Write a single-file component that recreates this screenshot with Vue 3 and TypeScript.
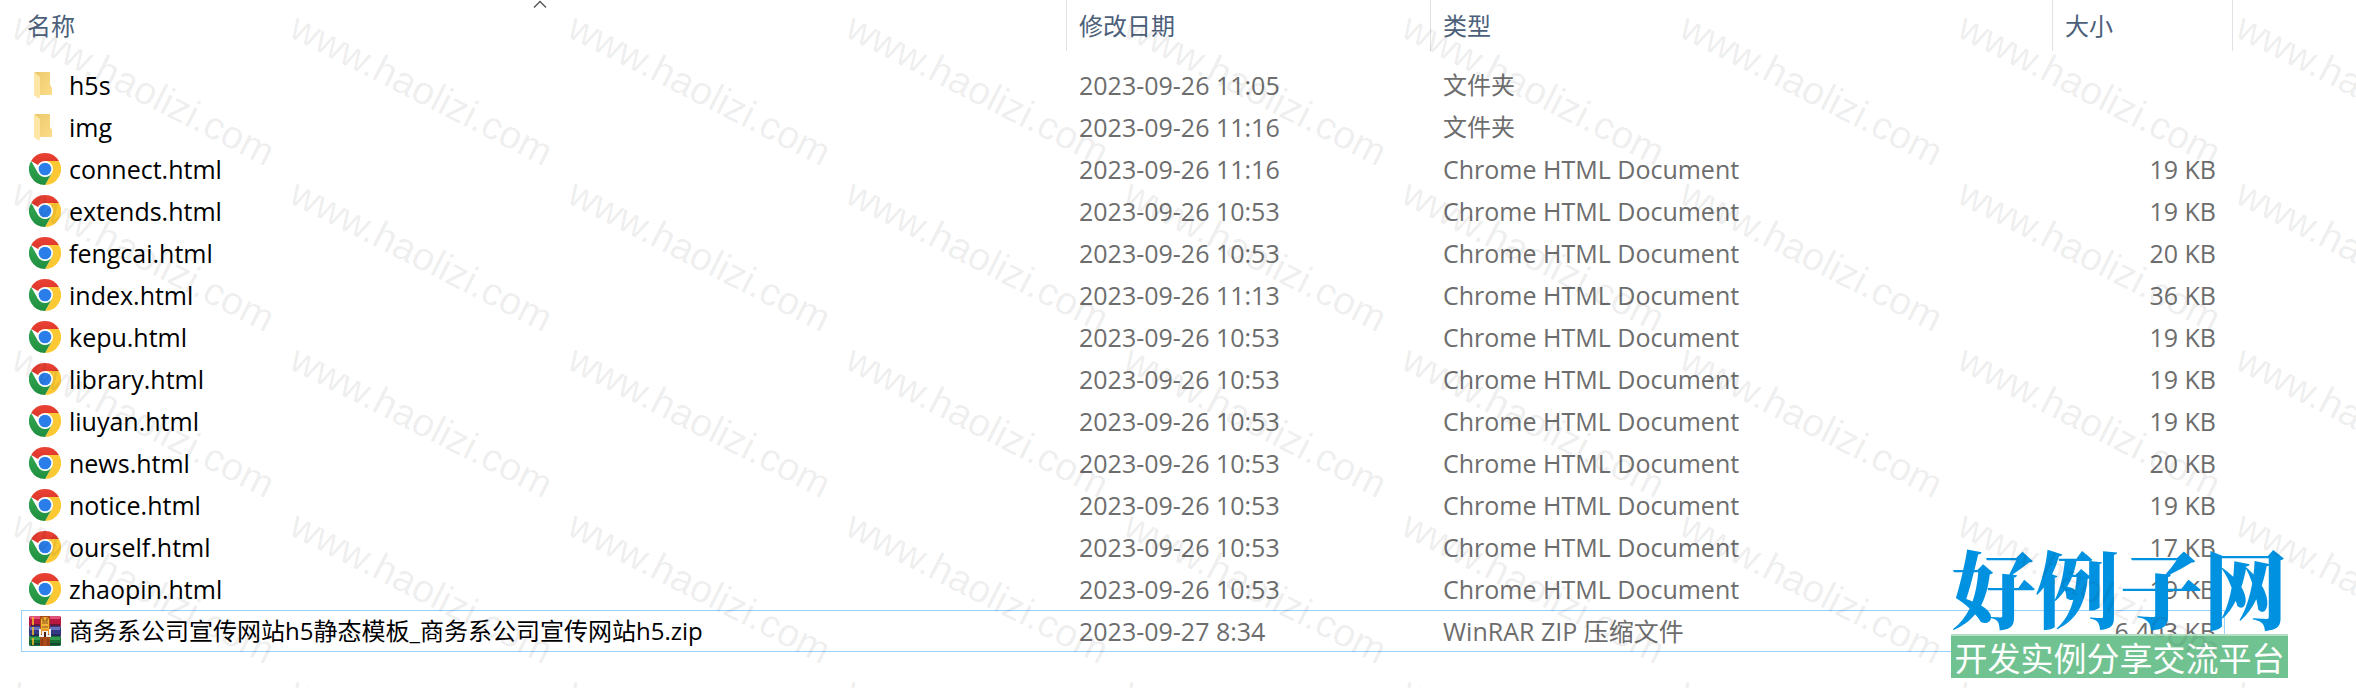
<script setup lang="ts">
type Kind = 'folder' | 'chrome' | 'archive'

interface FileRow {
  name: string
  date: string
  type: string
  size: string
  kind: Kind
}

const page = (name: string, time: string, size: number): FileRow => ({
  name,
  date: `2023-09-26 ${time}`,
  type: 'Chrome HTML Document',
  size: `${size} KB`,
  kind: 'chrome',
})

const folder = (name: string, time: string): FileRow => ({
  name,
  date: `2023-09-26 ${time}`,
  type: '文件夹',
  size: '',
  kind: 'folder',
})

const files: FileRow[] = [
  folder('h5s', '11:05'),
  folder('img', '11:16'),
  page('connect.html', '11:16', 19),
  page('extends.html', '10:53', 19),
  page('fengcai.html', '10:53', 20),
  page('index.html', '11:13', 36),
  page('kepu.html', '10:53', 19),
  page('library.html', '10:53', 19),
  page('liuyan.html', '10:53', 19),
  page('news.html', '10:53', 20),
  page('notice.html', '10:53', 19),
  page('ourself.html', '10:53', 17),
  page('zhaopin.html', '10:53', 19),
  {
    name: '商务系公司宣传网站h5静态模板_商务系公司宣传网站h5.zip',
    date: '2023-09-27 8:34',
    type: 'WinRAR ZIP 压缩文件',
    size: '6,403 KB',
    kind: 'archive',
  },
]

const columns = ['名称', '修改日期', '类型', '大小']
</script>

<template>
  <main class="explorer">
    <table class="files">
      <colgroup>
        <col />
        <col class="col-date" />
        <col class="col-type" />
        <col class="col-size" />
        <col class="col-end" />
      </colgroup>
      <thead>
        <tr>
          <th v-for="(label, i) in columns" :key="label" scope="col" :class="{ last: i === 3 }">
            <button type="button">{{ label }}</button>
            <svg v-if="i === 0" class="caret" viewBox="0 0 14 8" aria-hidden="true">
              <path d="M1 7.5 7 1.5l6 6" fill="none" stroke="#555" stroke-width="1.4" />
            </svg>
          </th>
          <td></td>
        </tr>
      </thead>
      <tbody>
        <tr v-for="file in files" :key="file.name" :class="[file.kind, { focused: file.kind === 'archive' }]">
          <td class="name">
            <div class="entry">
              <svg v-if="file.kind === 'folder'" class="icon" viewBox="0 0 32 32" aria-hidden="true">
                <defs>
                  <linearGradient id="folderBack" x1="0" x2="1" y1="0" y2="1">
                    <stop offset="0" stop-color="#edc96c" />
                    <stop offset="1" stop-color="#fbdc88" />
                  </linearGradient>
                </defs>
                <path d="M6 3h15v13l2 3v7H6z" fill="url(#folderBack)" />
                <path d="M5 3l6 5v19l-1 3-5-4z" fill="#fde6a6" />
              </svg>
              <svg v-else-if="file.kind === 'chrome'" class="icon" viewBox="0 0 32 32" aria-hidden="true">
                <defs>
                  <linearGradient id="chromeRed" x1="0" x2="0" y1="0" y2="1">
                    <stop offset="0" stop-color="#ea4335" />
                    <stop offset="1" stop-color="#d93025" />
                  </linearGradient>
                  <linearGradient id="chromeGreen" x1="0" x2="0" y1="0" y2="1">
                    <stop offset="0" stop-color="#34a853" />
                    <stop offset="1" stop-color="#1e8e3e" />
                  </linearGradient>
                </defs>
                <path d="M16 16 2.14 8A16 16 0 0 1 29.86 8z" fill="url(#chromeRed)" />
                <path d="M16 8h13.86A16 16 0 0 1 16 32l6.93-12z" fill="#fcc934" />
                <path d="M2.14 8 9.07 20l6.93 4 6.93-4L16 32A16 16 0 0 1 2.14 8z" fill="url(#chromeGreen)" />
                <circle cx="16" cy="16" r="8" fill="#fff" />
                <circle cx="16" cy="16" r="6.3" fill="#2b7de9" />
              </svg>
              <svg v-else class="icon" viewBox="0 0 32 32" aria-hidden="true">
                <rect x="0" y="1" width="32" height="11" rx="1.5" fill="#b8173f" />
                <rect x="1" y="1" width="30" height="3" fill="#e0527a" />
                <rect x="0" y="11" width="32" height="11" rx="1.5" fill="#343985" />
                <rect x="1" y="12" width="30" height="3" fill="#6871bb" />
                <rect x="0" y="21" width="32" height="10" rx="1.5" fill="#166e32" />
                <rect x="1" y="22" width="30" height="3" fill="#369a50" />
                <path d="M2 10h29M2 20h29M2 29h29" stroke="#171b35" stroke-width="1.2" />
                <path d="M4 2v8M4 12v8M4 23v7" stroke="#f5bc2c" stroke-width="1.6" />
                <rect x="11" y="1" width="10" height="30" fill="#a94a18" />
                <path d="M12 12h8v7h-8z" fill="#e99526" />
                <path d="M12 14V5q0-3 4-3t4 3v9z" fill="#f3b537" />
                <path d="M14 3v3h4V3M13 8h6M13 12h6" fill="none" stroke="#8b5419" stroke-width="1.2" />
                <path d="M11 14v7h3v-4h4v4h3v-7" fill="none" stroke="#eee" stroke-width="2" />
                <path d="M16 17v5" stroke="#4d1e14" stroke-width="2" />
                <path d="M13 24v7M19 24v7" stroke="#7b2c10" stroke-width="1" />
              </svg>
              <span>{{ file.name }}</span>
            </div>
          </td>
          <td>{{ file.date }}</td>
          <td class="type">{{ file.type }}</td>
          <td class="size">{{ file.size }}</td>
        </tr>
      </tbody>
    </table>

    <aside class="brand">
      <div class="brand-name">好例子网</div>
      <div class="brand-tag">开发实例分享交流平台</div>
    </aside>

    <div class="watermark" aria-hidden="true">
      <div v-for="n in 45" :key="n" class="tile"><span>www.haolizi.com</span></div>
    </div>
  </main>
</template>

<style>
body {
  background: #fff;
}
</style>

<style scoped>
.explorer {
  position: relative;
  min-height: 100vh;
  overflow: hidden;
  background: #fff;
  color: #6d6d6d;
  font: 25px/32px "Open Sans", "Noto Sans CJK SC", sans-serif;
}

.files {
  width: calc(100% - 144px);
  margin: 0 123px 0 21px;
  table-layout: fixed;
  border-collapse: separate;
  border-spacing: 0;
}

.col-date { width: 364px; }
.col-type { width: 622px; }
.col-size { width: 172px; }
.col-end { width: 8px; }

th,
td {
  padding: 0 0 0 12px;
  text-align: left;
  white-space: nowrap;
}

thead th,
thead td {
  position: relative;
  height: 51px;
  border-right: 1px solid #e2e2e2;
  box-sizing: border-box;
  font-weight: 400;
}

thead td {
  padding: 0;
}

thead th.last {
  border-right: 0;
}

thead th:first-child {
  padding-left: 6px;
}

thead::after {
  content: "";
  display: block;
  height: 13px;
}

th button {
  display: block;
  padding: 0;
  border: 0;
  background: none;
  color: #4c607a;
  font: inherit;
  font-size: 24px;
}

.caret {
  position: absolute;
  top: 0;
  left: 0;
  right: 8px;
  width: 14px;
  height: 8px;
  margin: 0 auto;
}

tbody td {
  height: 42px;
  box-sizing: border-box;
}

.name {
  padding-left: 8px;
  color: #000;
}

.folder .type,
.archive .name {
  font-size: 24px;
}

.entry {
  display: flex;
  align-items: center;
  gap: 8px;
}

.icon {
  flex: none;
  width: 32px;
  height: 32px;
}

td.size {
  padding: 0 9px 0 0;
  text-align: right;
}

.focused td {
  border: solid #99d1ff;
  border-width: 1px 0;
}

.focused td.name {
  border-left-width: 1px;
  padding-left: 7px;
}

.focused td.size {
  border-right-width: 1px;
  padding-right: 8px;
}

.brand {
  position: absolute;
  right: 68px;
  bottom: 10px;
  width: 337px;
  text-align: center;
  white-space: nowrap;
}

.brand-name {
  color: #0092e0;
  font: 900 84px/96px "Noto Serif CJK SC", "Noto Sans CJK SC", serif;
}

.brand-tag {
  border-top: 2px solid #b5dfc5;
  background: #71c291;
  color: #fff;
  font: 33px/42px "Noto Sans CJK SC", sans-serif;
}

.watermark {
  position: absolute;
  inset: 0;
  display: grid;
  grid-template-columns: repeat(9, 278px);
  grid-auto-rows: 166px;
  overflow: hidden;
  pointer-events: none;
}

.tile {
  padding: 2px 0 0 6px;
  color: rgba(0, 0, 0, 0.08);
  font: 39px/40px "Liberation Sans", sans-serif;
}

.tile span {
  display: inline-block;
  transform: rotate(27deg);
  transform-origin: 0 100%;
}
</style>
